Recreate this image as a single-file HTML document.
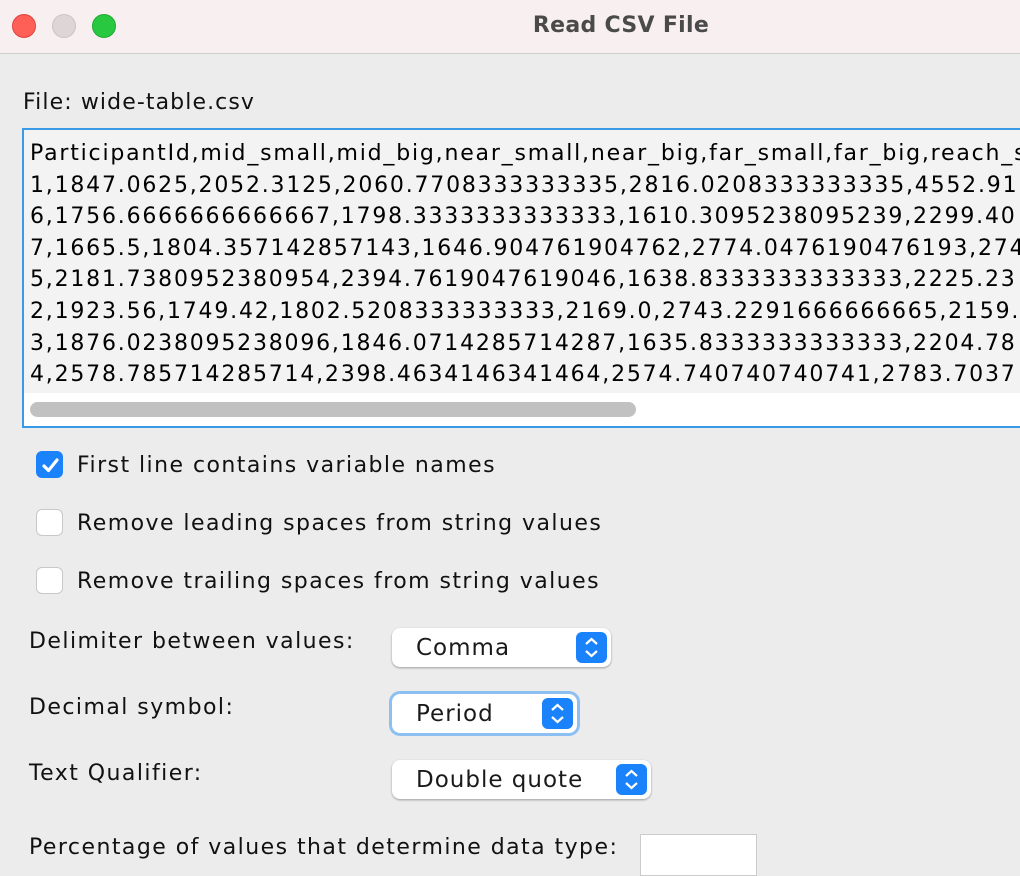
<!DOCTYPE html>
<html><head><style>
body{margin:0;width:1020px;height:852px;overflow:hidden;background:#ececec;font-family:"DejaVu Sans",sans-serif;color:#1a1a1a;position:relative}
.tb{position:absolute;left:0;top:0;width:1020px;height:53px;background:#f8eff0;border-bottom:1px solid #cfcfcf}
.dot{position:absolute;top:14px;width:24px;height:24px;border-radius:50%}
.title{position:absolute;left:0;width:1242px;top:13px;text-align:center;font-size:22px;font-weight:bold;color:#4a4a4a;letter-spacing:0.3px}
.abs{position:absolute;white-space:nowrap}
.ta{position:absolute;left:22px;top:128px;width:1010px;height:296px;border:2px solid #3a9ae6;background:#fff;overflow:hidden}
.ta pre{margin:0;padding:8px 0 0 6px;font-family:"DejaVu Sans",sans-serif;font-size:22px;line-height:31.6px;color:#000;background:#f3f3f3;height:255px;letter-spacing:1.8px}
.sb{position:absolute;left:6px;top:272px;width:606px;height:15px;border-radius:8px;background:#c1c1c1}
.lbl{font-size:22px;color:#111;letter-spacing:1.45px}
.cb{position:absolute;left:36px;width:27px;height:27px;border-radius:6px;background:#fff;border:1px solid #c8c8c8;box-sizing:border-box}
.cb.on{background:#1a82fb;border-color:#1a82fb}
.sel{position:absolute;left:392px;height:39px;background:#fff;border-radius:8px;box-shadow:0 1px 2px rgba(0,0,0,.35);font-size:23px;line-height:40px;box-sizing:border-box;padding-left:24px;letter-spacing:1px}
.arr{position:absolute;right:4px;top:4px;width:31px;height:31px;border-radius:6px;background:#1a82fb}
</style></head><body>
<div class="tb">
<div class="dot" style="left:12px;background:#fe5f57;border:1px solid #e0443e;box-sizing:border-box"></div>
<div class="dot" style="left:52px;background:#ddd5d6;border:1px solid #cbc3c4;box-sizing:border-box"></div>
<div class="dot" style="left:92px;background:#28c840;border:1px solid #1faa34;box-sizing:border-box"></div>
<div class="title">Read CSV File</div>
</div>
<div class="abs lbl" style="left:23px;top:90px;letter-spacing:1.1px">File: wide-table.csv</div>
<div class="ta"><pre>ParticipantId,mid_small,mid_big,near_small,near_big,far_small,far_big,reach_s
1,1847.0625,2052.3125,2060.7708333333335,2816.0208333333335,4552.91
6,1756.6666666666667,1798.3333333333333,1610.3095238095239,2299.40
7,1665.5,1804.357142857143,1646.904761904762,2774.0476190476193,274
5,2181.7380952380954,2394.7619047619046,1638.8333333333333,2225.23
2,1923.56,1749.42,1802.5208333333333,2169.0,2743.2291666666665,2159.
3,1876.0238095238096,1846.0714285714287,1635.8333333333333,2204.78
4,2578.785714285714,2398.4634146341464,2574.740740740741,2783.7037</pre>
<div class="sb"></div></div>
<div class="cb on" style="top:451px"><svg width="27" height="27" viewBox="0 0 27 27"><path d="M7 14l4.5 4.5L20 8" stroke="#fff" stroke-width="3.2" fill="none" stroke-linecap="round" stroke-linejoin="round"/></svg></div>
<div class="abs lbl" style="left:77px;top:453px">First line contains variable names</div>
<div class="cb" style="top:509px"></div>
<div class="abs lbl" style="left:77px;top:511px">Remove leading spaces from string values</div>
<div class="cb" style="top:567px"></div>
<div class="abs lbl" style="left:77px;top:569px">Remove trailing spaces from string values</div>
<div class="abs lbl" style="left:29px;top:629px">Delimiter between values:</div>
<div class="abs lbl" style="left:29px;top:695px">Decimal symbol:</div>
<div class="abs lbl" style="left:29px;top:761px">Text Qualifier:</div>
<div class="abs lbl" style="left:29px;top:835px">Percentage of values that determine data type:</div>
<div class="sel" style="top:628px;width:219px">Comma<div class="arr"><svg width="31" height="31"><path d="M10 12l5.5-5 5.5 5M10 19l5.5 5 5.5-5" stroke="#fff" stroke-width="2.2" fill="none"/></svg></div></div>
<div class="sel" style="top:694px;width:185px;box-shadow:0 0 0 3px #8cbff2">Period<div class="arr"><svg width="31" height="31"><path d="M10 12l5.5-5 5.5 5M10 19l5.5 5 5.5-5" stroke="#fff" stroke-width="2.2" fill="none"/></svg></div></div>
<div class="sel" style="top:760px;width:259px">Double quote<div class="arr"><svg width="31" height="31"><path d="M10 12l5.5-5 5.5 5M10 19l5.5 5 5.5-5" stroke="#fff" stroke-width="2.2" fill="none"/></svg></div></div>
<div class="abs" style="left:640px;top:834px;width:115px;height:40px;background:#fff;border:1px solid #ccc"></div>
</body></html>
